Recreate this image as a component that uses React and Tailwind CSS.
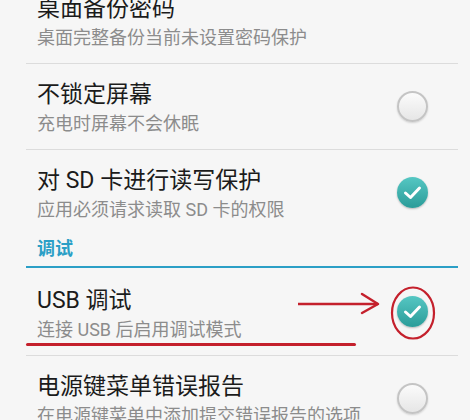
import React from "react";

function Radio() {
  return (
    <div className="w-[31px] h-[31px] rounded-full border-2 border-[#c4c4c4] bg-linear-to-b from-[#fbfbfb] to-[#e6e6e6] shadow-[0_1px_2px_rgba(0,0,0,0.15)] shrink-0" />
  );
}

function Check() {
  return (
    <div className="w-[31px] h-[31px] rounded-full bg-linear-to-b from-[#55c7c3] to-[#2a9c99] shadow-[0_1px_2px_rgba(0,0,0,0.25)] flex items-center justify-center shrink-0">
      <svg width="31" height="31" viewBox="0 0 31 31">
        <path d="M8.5 16 L13.5 20.5 L22.5 11" fill="none" stroke="#ffffff" strokeWidth="3" strokeLinecap="round" strokeLinejoin="round" />
      </svg>
    </div>
  );
}

function Row({ title, sub, control, h = "h-[86px]", pt = "pt-[17px]", border = true, children }) {
  return (
    <div className={`relative flex justify-between ${h} ${border ? "border-b border-[#dcdcdc]" : ""} pl-[11px] pr-[30px]`}>
      <div className={`${pt} flex flex-col`}>
        <div className="text-[23px] leading-[28px] text-[#1b1b1b]">{title}</div>
        <div className="text-[18px] leading-[30px] text-[#8c8c8c]">{sub}</div>
      </div>
      <div className="self-center">{control}</div>
      {children}
    </div>
  );
}

export default function App() {
  return (
    <div
      className="w-[470px] h-[420px] overflow-hidden bg-[#f6f6f6]"
      style={{ fontFamily: 'Roboto, "Noto Sans CJK SC", sans-serif' }}
    >
      <div className="-mt-[22px] ml-[26px] mr-[12px]">
        <Row title="桌面备份密码" sub="桌面完整备份当前未设置密码保护" control={null} />
        <Row title="不锁定屏幕" sub="充电时屏幕不会休眠" control={<Radio />} />
        <Row title="对 SD 卡进行读写保护" sub="应用必须请求读取 SD 卡的权限" control={<Check />} h="h-[85px]" border={false} />
        <div className="h-[33px] border-b-2 border-[#2b9fc6] pl-[11px]">
          <div className="text-[18px] leading-[28px] font-bold text-[#2b9fc6]">调试</div>
        </div>
        <Row title="USB 调试" sub="连接 USB 后启用调试模式" control={<Check />} h="h-[88px]" pt="pt-[19px]">
          <div className="absolute left-0 top-[75px] w-[330px] h-[3px] bg-[#c4202c] rounded-full pointer-events-none" />
          <svg className="absolute left-[270px] top-[22px] pointer-events-none" width="86" height="26" viewBox="0 0 86 26">
            <path d="M2 14 L82 14" stroke="#c4202c" strokeWidth="2.5" fill="none" />
            <path d="M66 4 L82 14 L66 23" stroke="#c4202c" strokeWidth="2.5" fill="none" strokeLinecap="round" strokeLinejoin="round" />
          </svg>
          <svg className="absolute left-[363px] top-[17px] pointer-events-none" width="48" height="56" viewBox="0 0 48 56">
            <ellipse cx="24" cy="28" rx="21" ry="25.5" stroke="#c4202c" strokeWidth="2.2" fill="none" />
          </svg>
        </Row>
        <Row title="电源键菜单错误报告" sub="在电源键菜单中添加提交错误报告的选项" control={<Radio />} />
      </div>
    </div>
  );
}
